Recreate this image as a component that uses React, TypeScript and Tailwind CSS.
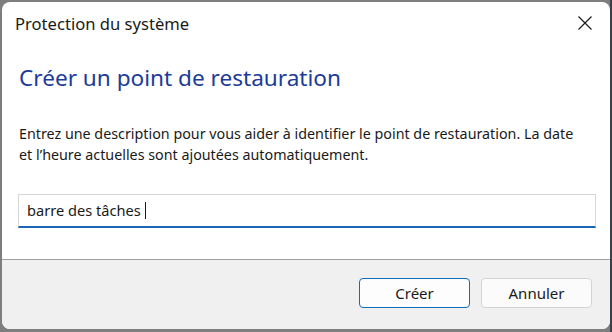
import React from "react";

export default function App() {
  return (
    <div className="w-[612px] h-[332px] bg-[#7e7e7e] pt-[2px] pl-[2px] overflow-hidden relative" style={{ fontFamily: '"Noto Sans", sans-serif' }}>
      <div className="absolute right-0 top-0 w-[2px] h-full bg-[#3b3f4a]" />
      <div className="w-[608px] h-[327px] bg-white rounded-[8px] overflow-hidden flex flex-col relative">
        <div className="h-[48px] flex items-start justify-between pl-[13px] pr-[17px] pt-[10px]">
          <span className="text-[16.6px] text-[#1a1a1a] leading-[24px]">Protection du système</span>
          <svg width="16" height="16" viewBox="0 0 16 16" className="mt-[3px]">
            <path d="M1.5 1.5 L14.5 14.5 M14.5 1.5 L1.5 14.5" stroke="#1a1a1a" strokeWidth="1.2" fill="none" />
          </svg>
        </div>
        <div className="pl-[17px] pt-[13px]">
          <h1 className="text-[22.6px] text-[#1c3b98] leading-[30px]">Créer un point de restauration</h1>
        </div>
        <div className="pl-[17px] pt-[30px]">
          <p className="text-[14.3px] text-[#1a1a1a] leading-[21px] whitespace-nowrap">
            Entrez une description pour vous aider à identifier le point de restauration. La date
            <br />
            et l’heure actuelles sont ajoutées automatiquement.
          </p>
        </div>
        <div className="pl-[16px] pr-[14px] pt-[29px]">
          <div className="h-[34px] border border-[#d7d7d7] border-b-2 border-b-[#1b66b4] flex items-center pl-[8px]">
            <span className="text-[14.6px] text-[#1a1a1a]">barre des tâches</span>
            <span className="ml-[4px] w-[1px] h-[17px] bg-[#1a1a1a]" />
          </div>
        </div>
        <div className="flex-1" />
        <div className="h-[70px] bg-[#f0f0f0] border-t border-[#a0a0a0] flex items-start justify-end gap-[11px] pr-[18px] pt-[18px]">
          <button className="w-[111px] h-[30px] rounded-[4px] border border-[#0f6cbd] bg-[#fdfdfd] text-[15px] text-[#1a1a1a]">Créer</button>
          <button className="w-[111px] h-[30px] rounded-[4px] border border-[#d4d4d4] bg-[#fbfbfb] text-[15px] text-[#1a1a1a]">Annuler</button>
        </div>
      </div>
    </div>
  );
}
